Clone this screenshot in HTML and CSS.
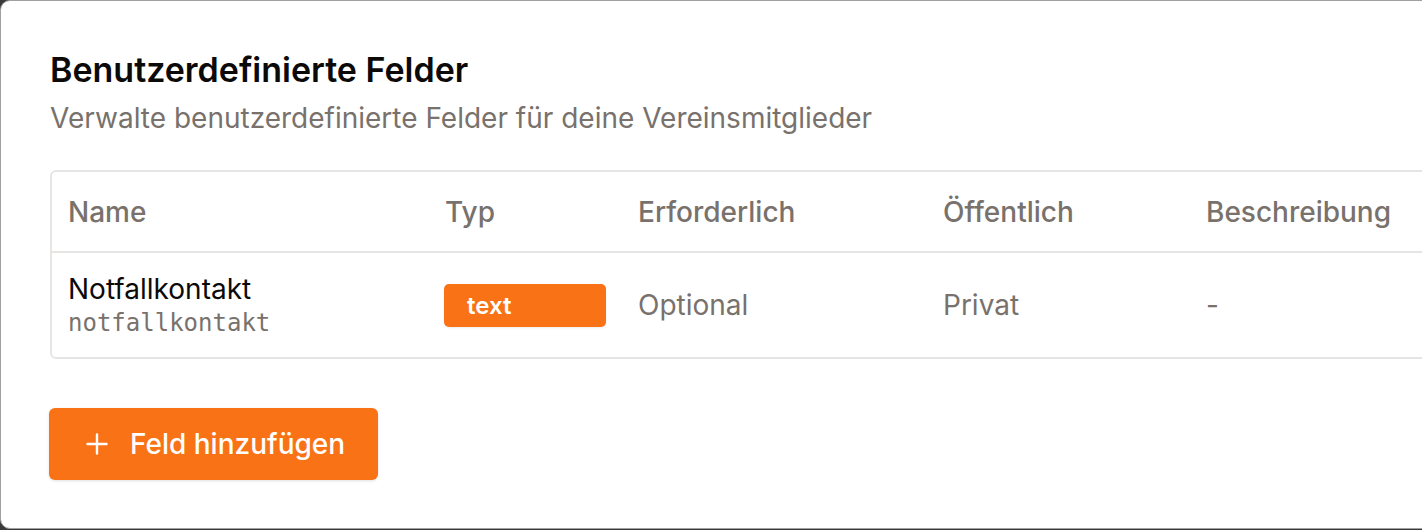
FILE: index.html
```html
<!DOCTYPE html>
<html lang="de">
<head>
<meta charset="utf-8">
<link rel="stylesheet" href="styles.css">
</head>
<body>
<div class="card">
  <h1 class="title">Benutzerdefinierte Felder</h1>
  <p class="subtitle">Verwalte benutzerdefinierte Felder für deine Vereinsmitglieder</p>
  <div class="table">
    <div class="row head">
      <div class="cell c1">Name</div>
      <div class="cell c2">Typ</div>
      <div class="cell c3">Erforderlich</div>
      <div class="cell c4">Öffentlich</div>
      <div class="cell c5">Beschreibung</div>
    </div>
    <div class="row body">
      <div class="cell c1">
        <div class="fname">Notfallkontakt</div>
        <div class="fkey">notfallkontakt</div>
      </div>
      <div class="cell c2"><span class="badge">text</span></div>
      <div class="cell c3 muted">Optional</div>
      <div class="cell c4 muted">Privat</div>
      <div class="cell c5 muted">-</div>
    </div>
  </div>
  <button class="add">
    <svg class="plus" width="22" height="22" viewBox="0 0 22 22"><path d="M11 1.5v19M1.5 11h19" stroke="#fff" stroke-width="2.4" stroke-linecap="round" fill="none"/></svg>
    <span>Feld hinzufügen</span>
  </button>
</div>
</body>
</html>
```

FILE: styles.css
```css
html, body {
  margin: 0;
  padding: 0;
  background: #3a3a3a;
  overflow: hidden;
  height: 530px;
}
body {
  font-family: Inter, "Noto Sans", sans-serif;
}
.card {
  box-sizing: border-box;
  width: 1520px;
  height: 529px;
  background: #fff;
  border: 1px solid #a0a0a0;
  border-radius: 10px;
  padding: 47px 0 0 49px;
}
.title {
  margin: 0;
  font-size: 34px;
  font-weight: 600;
  line-height: 44px;
  color: #0c0a09;
}
.subtitle {
  margin: 8px 0 0;
  font-size: 28px;
  line-height: 36px;
  color: #78716c;
}
.table {
  margin-top: 34px;
  width: 1500px;
  border: 2px solid #e7e5e4;
  border-radius: 6px;
}
.row {
  display: flex;
}
.head {
  height: 79px;
  align-items: center;
  border-bottom: 2px solid #e7e5e4;
}
.body {
  height: 104px;
  align-items: center;
}
.cell {
  box-sizing: border-box;
  padding-left: 16px;
  font-size: 28px;
}
.head .cell {
  color: #78716c;
  font-weight: 500;
}
.c1 { width: 377px; }
.c2 { width: 193px; }
.c3 { width: 305px; }
.c4 { width: 263px; }
.c5 { flex: 1; }
.muted { color: #78716c; }
.fname {
  color: #0c0a09;
  font-size: 28px;
  line-height: 34px;
}
.fkey {
  font-family: "DejaVu Sans Mono", monospace;
  font-size: 24px;
  color: #78716c;
  line-height: 30px;
  margin-top: 2px;
}
.badge {
  display: inline-block;
  box-sizing: border-box;
  width: 162px;
  height: 43px;
  line-height: 43px;
  padding-left: 23px;
  margin-left: -1px;
  background: #f97316;
  color: #fff;
  font-size: 24px;
  font-weight: 600;
  border-radius: 5px;
  box-shadow: 0 1px 2px rgba(0,0,0,0.08);
}
.add {
  margin-top: 49px;
  display: flex;
  align-items: center;
  gap: 22px;
  height: 72px;
  padding: 0 33px 0 37px;
  margin-left: -1px;
  background: #f97316;
  color: #fff;
  border: none;
  border-radius: 6px;
  font-family: Inter, sans-serif;
  font-size: 28px;
  font-weight: 500;
  box-shadow: 0 1px 3px rgba(0,0,0,0.12);
}
```
